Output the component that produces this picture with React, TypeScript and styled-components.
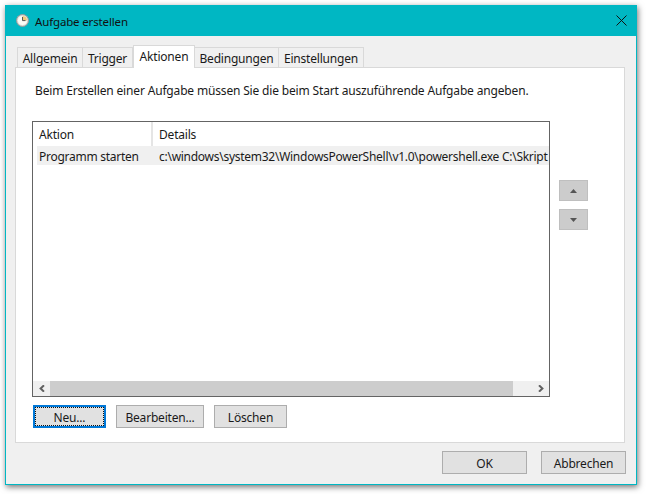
import React from "react";
import styled, { createGlobalStyle } from "styled-components";

const Global = createGlobalStyle`
  html, body {
    margin: 0;
    padding: 0;
    background: #fff;
  }
  body {
    font-family: "Noto Sans", "Open Sans", sans-serif;
    font-size: 12px;
    letter-spacing: -0.2px;
    color: #1a1a1a;
  }
`;

const Page = styled.div`
  width: 646px;
  height: 494px;
  padding: 5px 0 0 5px;
  box-sizing: border-box;
  overflow: hidden;
`;

const Win = styled.div`
  width: 632px;
  height: 480px;
  box-sizing: border-box;
  border: 1px solid #00b7c3;
  border-top: 0;
  background: #f0f0f0;
  box-shadow: 1px 2px 6px rgba(0, 0, 0, 0.55);
  display: flex;
  flex-direction: column;
`;

const TitleBar = styled.div`
  height: 31px;
  margin: 0 -1px;
  background: #00b7c3;
  display: flex;
  align-items: center;
  padding: 0 10px 0 11px;
  gap: 6px;
  flex: none;
`;

const TitleText = styled.span`
  flex: 1;
  font-size: 11.5px;
  letter-spacing: -0.15px;
  padding-top: 1px;
  color: #111;
`;

const Body = styled.div`
  flex: 1;
  padding: 9px 12px 0 9px;
  display: flex;
  flex-direction: column;
`;

const TabRow = styled.div`
  display: flex;
  align-items: flex-end;
  height: 23px;
  padding-left: 2px;
  position: relative;
  z-index: 1;
  margin-bottom: -1px;
`;

const Tab = styled.div<{ $active?: boolean; $w: number }>`
  width: ${(p) => p.$w}px;
  height: ${(p) => (p.$active ? 23 : 21)}px;
  box-sizing: border-box;
  border: 1px solid #d9d9d9;
  border-left-width: ${(p) => (p.$active ? 1 : 0)}px;
  border-bottom: ${(p) => (p.$active ? "0" : "1px solid #d9d9d9")};
  background: ${(p) => (p.$active ? "#fff" : "#f0f0f0")};
  display: flex;
  align-items: center;
  justify-content: center;
  padding-top: ${(p) => (p.$active ? 0 : 2)}px;
  padding-bottom: ${(p) => (p.$active ? 2 : 0)}px;
  white-space: nowrap;
  &:first-child {
    border-left-width: 1px;
  }
`;

const Panel = styled.div`
  width: 610px;
  height: 376px;
  box-sizing: border-box;
  border: 1px solid #d9d9d9;
  background: #fff;
  padding: 13px 0 0 16px;
  display: flex;
  flex-direction: column;
`;

const Intro = styled.div`
  height: 18px;
  line-height: 20px;
  margin-left: 3px;
  letter-spacing: -0.165px;
  white-space: nowrap;
`;

const ListArea = styled.div`
  margin-top: 22px;
  display: flex;
  gap: 9px;
`;

const List = styled.div`
  width: 518px;
  height: 276px;
  box-sizing: border-box;
  border: 1px solid #646464;
  display: flex;
  flex-direction: column;
  overflow: hidden;
`;

const HeaderRow = styled.div`
  display: flex;
  height: 24px;
  flex: none;
`;

const HeaderCell = styled.div<{ $w?: number }>`
  ${(p) => (p.$w ? `width: ${p.$w}px; border-right: 2px solid #e5e5e5;` : "flex: 1;")}
  box-sizing: border-box;
  padding-left: 6px;
  line-height: 26px;
`;

const Rows = styled.div`
  flex: 1;
`;

const Row = styled.div`
  height: 19px;
  margin-left: 4px;
  background: #f0f0f0;
  display: flex;
  line-height: 21px;
  letter-spacing: -0.27px;
  white-space: nowrap;
  overflow: hidden;
`;

const Cell = styled.div<{ $w?: number }>`
  ${(p) => (p.$w ? `width: ${p.$w}px; flex: none;` : "flex: 1;")}
  padding-left: ${(p) => (p.$w ? 2 : 0)}px;
  box-sizing: border-box;
`;

const HScroll = styled.div`
  height: 15px;
  background: #f0f0f0;
  display: flex;
  flex: none;
`;

const ScrollBtn = styled.div<{ $w: number; $end?: boolean }>`
  width: ${(p) => p.$w}px;
  display: flex;
  align-items: center;
  justify-content: ${(p) => (p.$end ? "flex-end" : "center")};
  padding-right: ${(p) => (p.$end ? 5 : 0)}px;
  box-sizing: border-box;
`;

const Thumb = styled.div`
  flex: 1;
  background: #cdcdcd;
`;

const Side = styled.div`
  display: flex;
  flex-direction: column;
  gap: 8px;
  padding-top: 59px;
`;

const MoveBtn = styled.div`
  width: 29px;
  height: 21px;
  box-sizing: border-box;
  background: #cccccc;
  border: 1px solid #bfbfbf;
  display: flex;
  align-items: center;
  justify-content: center;
`;

const ActionRow = styled.div`
  display: flex;
  gap: 10px;
  margin-top: 8px;
  margin-left: 1px;
`;

const Btn = styled.div<{ $w: number; $focus?: boolean }>`
  width: ${(p) => p.$w}px;
  height: 23px;
  box-sizing: border-box;
  background: #e1e1e1;
  border: ${(p) => (p.$focus ? "2px solid #0078d7" : "1px solid #adadad")};
  display: flex;
  align-items: center;
  justify-content: center;
  padding-top: 1px;
  position: relative;
  ${(p) =>
    p.$focus
      ? `&::after {
          content: "";
          position: absolute;
          inset: 0;
          border: 1px dotted #111;
        }`
      : ""}
`;

const Footer = styled.div`
  flex: 1;
  display: flex;
  justify-content: flex-end;
  align-items: flex-start;
  gap: 14px;
  padding-top: 8px;
  margin-right: -2px;
`;

const ClockIcon = () => (
  <svg width="13" height="13" viewBox="0 0 13 13">
    <circle cx="6.5" cy="6.5" r="6" fill="#dcdcd8" stroke="#9a9a9a" />
    <circle cx="6.5" cy="6.5" r="4.6" fill="#fbfbf6" />
    <path d="M6.5 1.9a4.6 4.6 0 0 1 4.6 4.6H6.5z" fill="#f2c879" />
    <path d="M6.5 3v3.6h3" fill="none" stroke="#555" />
  </svg>
);

const CloseIcon = () => (
  <svg width="11" height="11" viewBox="0 0 11 11">
    <path d="M.5.5l10 10M10.5.5l-10 10" stroke="#111" strokeWidth="1" fill="none" />
  </svg>
);

const Chevron = ({ left }: { left?: boolean }) => (
  <svg width="6" height="7" viewBox="0 0 6 7">
    <path
      d={left ? "M5 .3L1.6 3.5 5 6.7" : "M1 .3L4.4 3.5 1 6.7"}
      stroke="#606060"
      strokeWidth="2"
      fill="none"
    />
  </svg>
);

const Tri = ({ down }: { down?: boolean }) => (
  <svg width="7" height="4" viewBox="0 0 7 4">
    <path d={down ? "M0 0h7L3.5 4z" : "M3.5 0L7 4H0z"} fill="#555" />
  </svg>
);

const App: React.FC = () => {
  return (
    <Page>
      <Global />
      <Win>
        <TitleBar>
          <ClockIcon />
          <TitleText>Aufgabe erstellen</TitleText>
          <CloseIcon />
        </TitleBar>
        <Body>
          <TabRow>
            <Tab $w={66}>Allgemein</Tab>
            <Tab $w={50}>Trigger</Tab>
            <Tab $w={62} $active>
              Aktionen
            </Tab>
            <Tab $w={84}>Bedingungen</Tab>
            <Tab $w={85}>Einstellungen</Tab>
          </TabRow>
          <Panel>
            <Intro>
              Beim Erstellen einer Aufgabe müssen Sie die beim Start auszuführende Aufgabe angeben.
            </Intro>
            <ListArea>
              <List>
                <HeaderRow>
                  <HeaderCell $w={120}>Aktion</HeaderCell>
                  <HeaderCell>Details</HeaderCell>
                </HeaderRow>
                <Rows>
                  <Row>
                    <Cell $w={122}>Programm starten</Cell>
                    <Cell>c:\windows\system32\WindowsPowerShell\v1.0\powershell.exe C:\Skript</Cell>
                  </Row>
                </Rows>
                <HScroll>
                  <ScrollBtn $w={17}>
                    <Chevron left />
                  </ScrollBtn>
                  <Thumb />
                  <ScrollBtn $w={36} $end>
                    <Chevron />
                  </ScrollBtn>
                </HScroll>
              </List>
              <Side>
                <MoveBtn>
                  <Tri />
                </MoveBtn>
                <MoveBtn>
                  <Tri down />
                </MoveBtn>
              </Side>
            </ListArea>
            <ActionRow>
              <Btn $w={73} $focus>
                Neu...
              </Btn>
              <Btn $w={88}>Bearbeiten...</Btn>
              <Btn $w={73}>Löschen</Btn>
            </ActionRow>
          </Panel>
          <Footer>
            <Btn $w={85}>OK</Btn>
            <Btn $w={85}>Abbrechen</Btn>
          </Footer>
        </Body>
      </Win>
    </Page>
  );
};

export default App;
